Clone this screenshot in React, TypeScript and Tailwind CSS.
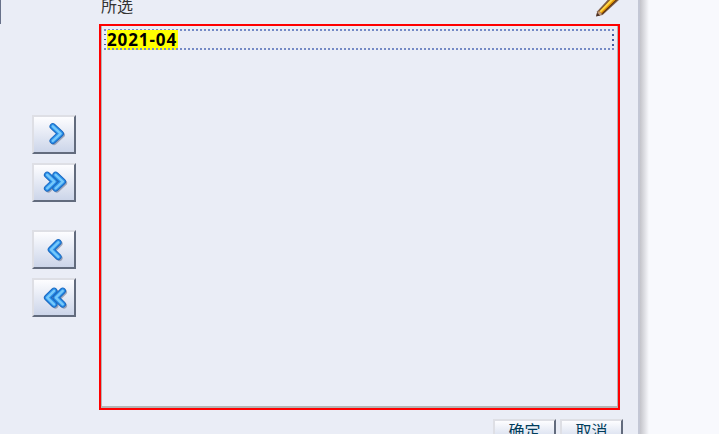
import React from "react";

type Direction = "right" | "left";

const chevrons: Record<string, string[]> = {
  right: ["M20.8 11.4 L28.6 18.6 L20.8 25.8"],
  right2: ["M15.2 11.9 L22.4 18.6 L15.2 25.3", "M23.6 11.9 L30.8 18.6 L23.6 25.3"],
  left: ["M26.3 12.4 L19 19.6 L26.3 26.8"],
  left2: ["M22.1 12.9 L15.2 19.6 L22.1 26.3", "M30.7 12.9 L23.8 19.6 L30.7 26.3"],
};

function MoveButton({ direction, all = false, label }: { direction: Direction; all?: boolean; label: string }) {
  const paths = chevrons[direction + (all ? "2" : "")];
  return (
    <button
      aria-label={label}
      className="block h-[39px] w-[44px] border-2 border-t-[#dedfe5] border-r-[#626b7d] border-b-[#626b7d] border-l-[#dedfe5] bg-gradient-to-b from-[#fdfdff] to-[#ccd5e9]"
    >
      <svg viewBox="2 2 40 35" width="40" height="35" fill="none" strokeLinecap="round" strokeLinejoin="round">
        {paths.map((d) => (
          <g key={d}>
            <path d={d} transform="translate(1.3 1.3)" stroke="#5b6680" strokeOpacity="0.5" strokeWidth="6" />
            <path d={d} stroke="#1a68c0" strokeWidth="6.6" />
            <path d={d} stroke="#2b8fe8" strokeWidth="4.8" />
            <path d={d} stroke="#76c9fb" strokeWidth="2.5" />
          </g>
        ))}
      </svg>
    </button>
  );
}

function Pencil() {
  return (
    <svg viewBox="594 0 28 18" width="28" height="18" className="block">
      <path d="M596.2 16.2 L597.2 11.2 L608.5 -1 L620 -1 L602.6 15 Z" fill="#806049" />
      <path d="M599 11.5 L611 -1 L618 -1 L602.8 13.9 Z" fill="#5c3210" />
      <path d="M599 11.7 L611 -1 L616.6 -1 L601.8 13.2 Z" fill="#e79a08" />
      <path d="M599.6 11.2 L611.4 -1 L614.2 -1 L600.9 12.2 Z" fill="#ffd84a" />
      <path d="M597.7 11.6 L600.1 11.8 L601.9 14.2 L599 15.5 Z" fill="#c89f7a" />
      <path d="M596.1 16.5 L597 13 L600.2 15.6 Z" fill="#4a3026" />
    </svg>
  );
}

function ActionButton({ children }: { children: string }) {
  return (
    <button className="h-[26px] w-[63px] border-2 border-t-[#dedfe5] border-r-[#626b7d] border-b-[#626b7d] border-l-[#dedfe5] bg-gradient-to-b from-[#fdfdff] to-[#ccd5e9] text-[16px] leading-[20px] text-[#003d5b]">
      {children}
    </button>
  );
}

export default function App() {
  return (
    <main className="flex h-[434px] w-[719px] overflow-hidden bg-[#f8f9fd] font-['Liberation_Sans','Noto_Sans_CJK_SC',sans-serif]">
      <section className="flex h-full w-[638px] shrink-0 bg-[#eaedf6]">
        <div className="h-[24px] w-px shrink-0 bg-[#68718a]" />
        <nav className="ml-[31px] flex w-[44px] shrink-0 flex-col pt-[115px]">
          <div className="flex flex-col gap-[9px]">
            <MoveButton direction="right" label="move" />
            <MoveButton direction="right" all label="move-all" />
          </div>
          <div className="mt-[28px] flex flex-col gap-[9px]">
            <MoveButton direction="left" label="remove" />
            <MoveButton direction="left" all label="remove-all" />
          </div>
        </nav>
        <div className="ml-[23px] w-[524px] shrink-0">
          <header className="flex h-[24px] w-[523px] justify-between">
            <h1 className="mt-[-5px] ml-[2px] text-[16px] leading-[24px] font-normal text-[#333333]">所选</h1>
            <Pencil />
          </header>
          <div className="h-[386px] w-[521px] border-2 border-[#ff0000]">
            <div className="h-[382px] w-[517px] border-r border-b-2 border-l border-[#b4b4b4] pt-[3px] pl-[2px]">
              <div className="flex h-[21px] w-[510px] flex-col">
                <div className="h-[2px] shrink-0 bg-[repeating-linear-gradient(90deg,#758ac5_0_2px,transparent_2px_4px)]" />
                <div className="flex h-[17px] justify-between">
                  <div className="flex">
                    <div className="w-[2px] bg-[repeating-linear-gradient(180deg,transparent_0_3px,#425b9d_3px_4px,transparent_4px_5px)]" />
                    <span className="-mt-px ml-px block h-[20px] w-[71px] bg-[#ffff00] font-['Noto_Sans','Open_Sans',sans-serif] text-[17px] leading-[20px] font-bold tracking-[0.9px] whitespace-nowrap text-black">
                      2021-04
                    </span>
                  </div>
                  <div className="w-[2px] bg-[repeating-linear-gradient(180deg,transparent_0_3px,#425b9d_3px_5px)]" />
                </div>
                <div className="h-[2px] shrink-0 bg-[repeating-linear-gradient(90deg,#758ac5_0_2px,transparent_2px_4px)]" />
              </div>
            </div>
          </div>
          <footer className="mt-[9px] ml-[394px] flex gap-[4px]">
            <ActionButton>确定</ActionButton>
            <ActionButton>取消</ActionButton>
          </footer>
        </div>
      </section>
      <div className="w-[2px] bg-[#c3c7d5]" />
      <div className="w-[9px] bg-gradient-to-r from-[#c4c4ca] to-[#f8f9fd]" />
    </main>
  );
}
